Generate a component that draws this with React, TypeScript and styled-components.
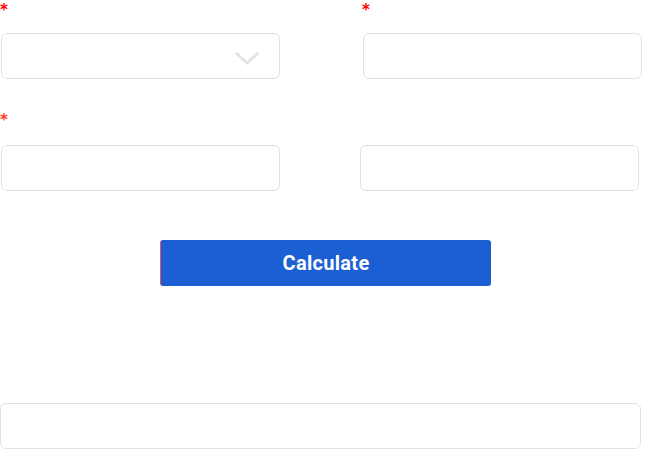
import * as React from 'react'
import styled, { createGlobalStyle } from 'styled-components'

const GlobalStyle = createGlobalStyle`
	html, body {
		margin: 0;
		padding: 0;
		background: #fff;
	}
	body {
		font-family: 'Liberation Sans', Arial, sans-serif;
	}
`

const Page = styled.div`
	width: 646px;
	height: 449px;
	overflow: hidden;
	display: flex;
	flex-direction: column;
`

const Row = styled.div<{ $gap: number; $top: number }>`
	display: flex;
	gap: ${(p) => p.$gap}px;
	padding-left: 1px;
	margin-top: ${(p) => p.$top}px;
`

const Field = styled.div`
	width: 279px;
	display: flex;
	flex-direction: column;
`

const Label = styled.div`
	height: 33px;
	position: relative;
`

const Required = styled.span<{ $tone?: 'red' | 'orange'; $top?: number }>`
	position: absolute;
	left: -1px;
	top: ${(p) => p.$top ?? 1}px;
	font-family: 'DejaVu Sans', sans-serif;
	font-size: 15px;
	font-weight: bold;
	line-height: 18px;
	color: ${(p) => (p.$tone === 'orange' ? '#ff3b1c' : '#ff0000')};
`

const Box = styled.div<{ $width?: number }>`
	box-sizing: border-box;
	width: ${(p) => (p.$width ? `${p.$width}px` : '100%')};
	height: 46px;
	border: 1px solid #e2e2e2;
	border-radius: 6px;
	background: #fff;
	display: flex;
	align-items: center;
	justify-content: flex-end;
	padding-right: 19px;
`

const Chevron = styled.svg`
	display: block;
	margin-top: 5px;
`

const ButtonRow = styled.div`
	display: flex;
	padding-left: 160px;
	margin-top: 49px;
`

const CalcButton = styled.button`
	box-sizing: border-box;
	width: 331px;
	height: 46px;
	border: none;
	border-left: 1px solid #e8506a;
	border-radius: 3px;
	background: #1c5fd4;
	color: #fff;
	font-family: Roboto, 'Noto Sans', sans-serif;
	font-weight: bold;
	font-size: 20px;
	letter-spacing: 0.3px;
	padding: 0;
	cursor: pointer;
`

const Result = styled(Box)`
	margin-top: 117px;
`

export default function App() {
	return (
		<Page>
			<GlobalStyle />
			<Row $gap={83} $top={0}>
				<Field>
					<Label>
						<Required>*</Required>
					</Label>
					<Box>
						<Chevron width="26" height="15" viewBox="0 0 26 15">
							<polyline
								points="2,2 13,12 24,2"
								fill="none"
								stroke="#e3e3e3"
								strokeWidth="3"
							/>
						</Chevron>
					</Box>
				</Field>
				<Field>
					<Label>
						<Required>*</Required>
					</Label>
					<Box />
				</Field>
			</Row>
			<Row $gap={80} $top={33}>
				<Field>
					<Label>
						<Required $tone="orange" $top={-1}>*</Required>
					</Label>
					<Box />
				</Field>
				<Field>
					<Label />
					<Box />
				</Field>
			</Row>
			<ButtonRow>
				<CalcButton>Calculate</CalcButton>
			</ButtonRow>
			<Result $width={641} />
		</Page>
	)
}
